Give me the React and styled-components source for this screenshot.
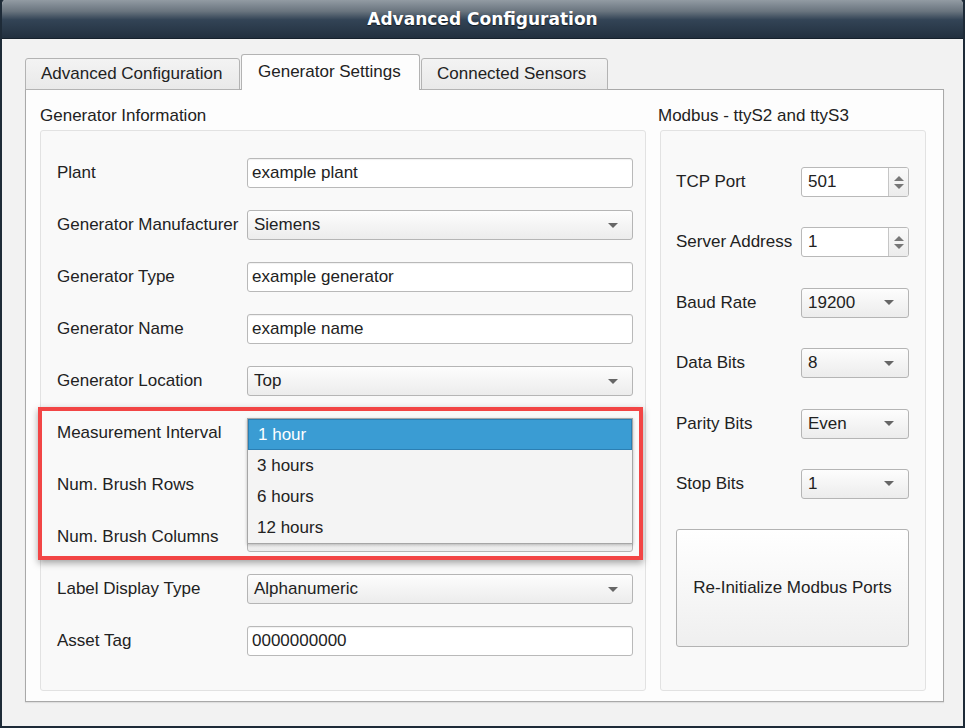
import React from 'react';
import styled, { createGlobalStyle } from 'styled-components';

const GlobalStyle = createGlobalStyle`
  html, body {
    margin: 0;
    padding: 0;
    background: #1e2b38;
  }
  body {
    font-family: "Liberation Sans", Arial, sans-serif;
    color: #222;
  }
`;

const Window = styled.div`
  width: 965px;
  height: 728px;
  box-sizing: border-box;
  background: #f2f2f2;
  border-left: 2px solid #1e2b38;
  border-right: 2px solid #1e2b38;
  border-bottom: 2px solid #1e2b38;
  border-radius: 5px 5px 0 0;
  overflow: hidden;
  display: flex;
  flex-direction: column;
`;

const TitleBar = styled.div`
  height: 38px;
  flex: none;
  margin: 0 -2px;
  background: linear-gradient(#929ba3 0%, #69747e 30%, #334456 52%, #22303f 100%);
  border-bottom: 1px solid #16212c;
  display: flex;
  align-items: center;
  justify-content: center;
  color: #fff;
  font-family: "DejaVu Sans", sans-serif;
  font-weight: bold;
  font-size: 17px;
  text-shadow: 0 1px 1px rgba(0, 0, 0, 0.6);
`;

const Body = styled.div`
  flex: 1;
  padding: 16px 19px 24px 23px;
  display: flex;
  flex-direction: column;
`;

const TabBar = styled.div`
  display: flex;
  align-items: flex-end;
  gap: 1px;
  height: 35px;
  position: relative;
  z-index: 1;
  margin-bottom: -1px;
`;

const Tab = styled.div`
  box-sizing: border-box;
  width: ${(p) => p.w}px;
  height: ${(p) => (p.active ? 36 : 32)}px;
  padding-left: ${(p) => p.pad}px;
  display: flex;
  align-items: center;
  font-size: 17px;
  color: #222;
  border: 1px solid #b3b3b3;
  border-bottom: ${(p) => (p.active ? 'none' : '1px solid #b3b3b3')};
  border-radius: 3px 3px 0 0;
  background: ${(p) =>
    p.active ? '#fdfdfd' : 'linear-gradient(#f3f3f3, #e9e9e9)'};
  padding-bottom: ${(p) => (p.active ? 1 : 0)}px;
`;

const Panel = styled.div`
  flex: 1;
  box-sizing: border-box;
  background: #fdfdfd;
  border: 1px solid #a9a9a9;
  box-shadow: 0 1px 1px rgba(0, 0, 0, 0.08);
  padding: 16px 17px 10px 14px;
  display: grid;
  grid-template-columns: 606px 268px;
  column-gap: 12px;
`;

const Section = styled.div`
  display: flex;
  flex-direction: column;
`;

const SectionTitle = styled.div`
  font-size: 17px;
  color: #222;
  height: 24px;
  line-height: 20px;
`;

const GroupBox = styled.div`
  flex: 1;
  position: relative;
  box-sizing: border-box;
  margin-left: ${(p) => p.offset || 0}px;
  background: #f9f9f9;
  border: 1px solid #e2e2e2;
  border-radius: 3px;
  padding: ${(p) => p.pad};
  display: flex;
  flex-direction: column;
  gap: ${(p) => p.gap}px;
`;

const Row = styled.div`
  display: flex;
  align-items: center;
  height: 30px;
  position: relative;
`;

const Label = styled.div`
  width: ${(p) => p.w}px;
  flex: none;
  font-size: 17px;
  color: #222;
  white-space: nowrap;
`;

const Field = styled.div`
  position: relative;
  flex: 1;
  height: 100%;
`;

const TextInput = styled.div`
  box-sizing: border-box;
  height: 100%;
  border: 1px solid #b9b9b9;
  border-radius: 3px;
  background: #fff;
  box-shadow: inset 0 1px 1px rgba(0, 0, 0, 0.06);
  display: flex;
  align-items: center;
  padding-left: 4px;
  font-size: 17px;
  color: #222;
`;

const ComboBox = styled.div`
  box-sizing: border-box;
  width: ${(p) => (p.w ? `${p.w}px` : '100%')};
  height: 100%;
  border: 1px solid #b5b5b5;
  border-radius: 3px;
  background: linear-gradient(#fdfdfd, #ececec);
  display: flex;
  align-items: center;
  padding: 0 14px 0 6px;
  font-size: 17px;
  color: #222;
`;

const ComboText = styled.span`
  flex: 1;
`;

const Arrow = styled.span`
  width: 0;
  height: 0;
  border-left: 5px solid transparent;
  border-right: 5px solid transparent;
  border-top: 5px solid #666;
`;

const Spin = styled.div`
  box-sizing: border-box;
  width: 108px;
  height: 100%;
  border: 1px solid #b9b9b9;
  border-radius: 3px;
  background: #fff;
  display: flex;
  font-size: 17px;
  color: #222;
  overflow: hidden;
`;

const SpinValue = styled.div`
  flex: 1;
  display: flex;
  align-items: center;
  padding-left: 6px;
`;

const SpinButtons = styled.div`
  width: 19px;
  border-left: 1px solid #c6c6c6;
  background: linear-gradient(#fafafa, #ececec);
  display: flex;
  flex-direction: column;
  align-items: center;
  justify-content: center;
  gap: 3px;
`;

const SpinArrow = styled.span`
  width: 0;
  height: 0;
  border-left: 5px solid transparent;
  border-right: 5px solid transparent;
  ${(p) => (p.up ? 'border-bottom: 5px solid #777;' : 'border-top: 5px solid #777;')}
`;

const BigButton = styled.div`
  height: 118px;
  box-sizing: border-box;
  border: 1px solid #b3b3b3;
  border-radius: 3px;
  background: linear-gradient(#ffffff, #efefef);
  display: flex;
  align-items: center;
  justify-content: center;
  font-size: 17px;
  color: #222;
`;

const Highlight = styled.div`
  position: absolute;
  left: -3px;
  top: 276px;
  width: 605px;
  height: 153px;
  box-sizing: border-box;
  border: 4px solid #f24545;
  box-shadow: 0 3px 7px rgba(0, 0, 0, 0.35);
  pointer-events: none;
  z-index: 3;
`;

const Popup = styled.div`
  position: absolute;
  left: 0;
  top: 0;
  width: 100%;
  box-sizing: border-box;
  background: #f4f4f4;
  border: 1px solid #a6a6a6;
  box-shadow: 0 1px 3px rgba(0, 0, 0, 0.25);
  z-index: 2;
`;

const Option = styled.div`
  height: 31px;
  box-sizing: border-box;
  display: flex;
  align-items: center;
  padding-left: 9px;
  font-size: 17px;
  color: ${(p) => (p.selected ? '#fff' : '#222')};
  background: ${(p) => (p.selected ? '#3a9cd3' : 'transparent')};
  border: ${(p) => (p.selected ? '1px solid #2b7fb3' : 'none')};
`;

const generatorRows = [
  { label: 'Plant', kind: 'text', value: 'example plant' },
  { label: 'Generator Manufacturer', kind: 'combo', value: 'Siemens' },
  { label: 'Generator Type', kind: 'text', value: 'example generator' },
  { label: 'Generator Name', kind: 'text', value: 'example name' },
  { label: 'Generator Location', kind: 'combo', value: 'Top' },
  { label: 'Measurement Interval', kind: 'combo', value: '', popup: true },
  { label: 'Num. Brush Rows', kind: 'combo', value: '' },
  { label: 'Num. Brush Columns', kind: 'combo', value: '' },
  { label: 'Label Display Type', kind: 'combo', value: 'Alphanumeric' },
  { label: 'Asset Tag', kind: 'text', value: '0000000000' },
];

const modbusRows = [
  { label: 'TCP Port', kind: 'spin', value: '501' },
  { label: 'Server Address', kind: 'spin', value: '1' },
  { label: 'Baud Rate', kind: 'combo', value: '19200' },
  { label: 'Data Bits', kind: 'combo', value: '8' },
  { label: 'Parity Bits', kind: 'combo', value: 'Even' },
  { label: 'Stop Bits', kind: 'combo', value: '1' },
];

const intervals = ['1 hour', '3 hours', '6 hours', '12 hours'];

function Combo({ value, w }) {
  return (
    <ComboBox w={w}>
      <ComboText>{value}</ComboText>
      <Arrow />
    </ComboBox>
  );
}

function GeneratorRow({ row }) {
  return (
    <Row>
      <Label w={190}>{row.label}</Label>
      <Field>
        {row.kind === 'text' ? (
          <TextInput>{row.value}</TextInput>
        ) : (
          <Combo value={row.value} />
        )}
        {row.popup && (
          <Popup>
            {intervals.map((item, i) => (
              <Option key={item} selected={i === 0}>
                {item}
              </Option>
            ))}
          </Popup>
        )}
      </Field>
    </Row>
  );
}

function ModbusRow({ row }) {
  return (
    <Row>
      <Label w={125}>{row.label}</Label>
      {row.kind === 'spin' ? (
        <Spin>
          <SpinValue>{row.value}</SpinValue>
          <SpinButtons>
            <SpinArrow up />
            <SpinArrow />
          </SpinButtons>
        </Spin>
      ) : (
        <Combo value={row.value} w={108} />
      )}
    </Row>
  );
}

export default function App() {
  return (
    <>
      <GlobalStyle />
      <Window>
        <TitleBar>Advanced Configuration</TitleBar>
        <Body>
          <TabBar>
            <Tab w={215} pad={15}>Advanced Configuration</Tab>
            <Tab w={179} pad={16} active>
              Generator Settings
            </Tab>
            <Tab w={187} pad={15}>Connected Sensors</Tab>
          </TabBar>
          <Panel>
            <Section>
              <SectionTitle>Generator Information</SectionTitle>
              <GroupBox pad="27px 12px 20px 16px" gap={22}>
                {generatorRows.map((row) => (
                  <GeneratorRow key={row.label} row={row} />
                ))}
                <Highlight />
              </GroupBox>
            </Section>
            <Section>
              <SectionTitle>Modbus - ttyS2 and ttyS3</SectionTitle>
              <GroupBox offset={2} pad="36px 16px 42px 15px" gap={30.4}>
                {modbusRows.map((row) => (
                  <ModbusRow key={row.label} row={row} />
                ))}
                <BigButton>Re-Initialize Modbus Ports</BigButton>
              </GroupBox>
            </Section>
          </Panel>
        </Body>
      </Window>
    </>
  );
}
